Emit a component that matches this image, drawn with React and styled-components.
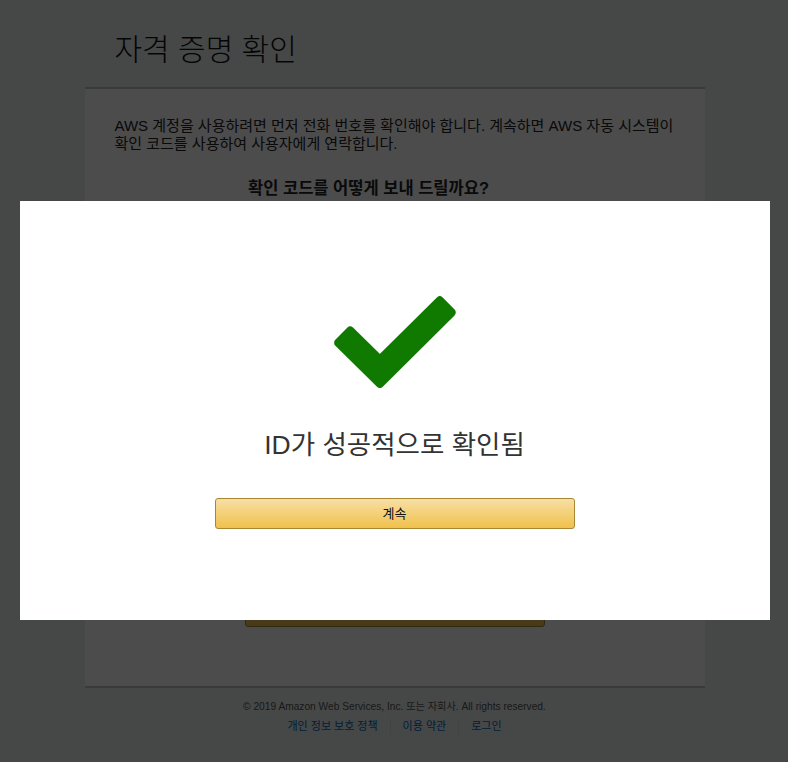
import styled, { createGlobalStyle } from "styled-components";

const GlobalStyle = createGlobalStyle`
    html, body {
        margin: 0;
        padding: 0;
        background: #eaf0ed;
        font-family: "Liberation Sans", Arial, "Noto Sans CJK KR", sans-serif;
    }
`;

export default function App(){
    return(
        <>
        <GlobalStyle/>
        <PAGE>
            <WRAP>
                <TITLE>자격 증명 확인</TITLE>
                <CARD>
                    <TEXT>AWS 계정을 사용하려면 먼저 전화 번호를 확인해야 합니다. 계속하면 AWS 자동 시스템이 확인 코드를 사용하여 사용자에게 연락합니다.</TEXT>
                    <QUESTION>확인 코드를 어떻게 보내 드릴까요?</QUESTION>
                    <HIDDEN/>
                    <BIGBUTTON>SMS 보내기</BIGBUTTON>
                </CARD>
                <FOOTER>
                    <COPY>© 2019 Amazon Web Services, Inc. 또는 자회사. All rights reserved.</COPY>
                    <LINKS>
                        <LINK href="#">개인 정보 보호 정책</LINK>
                        <LINK href="#">이용 약관</LINK>
                        <LINK href="#">로그인</LINK>
                    </LINKS>
                </FOOTER>
            </WRAP>
        </PAGE>
        <OVERLAY>
            <MODAL>
                <svg width="122" height="92" viewBox="2.2 2.4 117.2 86.8" preserveAspectRatio="none">
                    <polygon
                        points="6.3,46.5 46.3,85.1 115.2,18 103.8,6.6 46.3,62.5 17.7,35.1"
                        fill="#107a00"
                        stroke="#107a00"
                        strokeWidth="8"
                        strokeLinejoin="round"
                    />
                </svg>
                <MESSAGE>ID가 성공적으로 확인됨</MESSAGE>
                <BUTTON>계속</BUTTON>
            </MODAL>
        </OVERLAY>
        </>
    );
}

const PAGE = styled.div`
    min-height: 762px;
    background: #eaf0ed;
`;
const WRAP = styled.div`
    width: 620px;
    margin: 0 auto;
    padding-left: 1px;
`;
const TITLE = styled.h1`
    margin: 0;
    padding: 30px 30px 18px 30px;
    height: 39px;
    font-size: 30px;
    font-weight: 300;
    line-height: 39px;
    color: #111;
`;
const CARD = styled.div`
    background: #ffffff;
    border-top: 2px solid #c4c4c4;
    border-bottom: 2px solid #c4c4c4;
    padding: 28px 30px 59px 30px;
`;
const TEXT = styled.p`
    margin: 0;
    font-size: 15px;
    line-height: 18px;
    color: #222;
`;
const QUESTION = styled.h3`
    margin: 25px 52px 0 0;
    text-align: center;
    font-size: 16.5px;
    font-weight: 700;
    line-height: 20px;
    color: #222;
`;
const HIDDEN = styled.div`
    height: 399px;
`;
const BIGBUTTON = styled.div`
    width: 298px;
    height: 28px;
    margin: 0 auto;
    border: 1px solid #a88734;
    border-radius: 3px;
    background: linear-gradient(#f7dfa5, #f0c14b);
    font-size: 13px;
    line-height: 28px;
    text-align: center;
    color: #111;
`;
const FOOTER = styled.div`
    padding-top: 11px;
    text-align: center;
`;
const COPY = styled.div`
    font-size: 10.2px;
    line-height: 16px;
    color: #555;
`;
const LINKS = styled.div`
    display: flex;
    justify-content: center;
    margin-top: 3px;
`;
const LINK = styled.a`
    font-size: 11px;
    line-height: 16px;
    color: #0066c0;
    text-decoration: none;
    padding: 0 12px;
    & + & {
        border-left: 1px solid #ddd;
    }
`;
const OVERLAY = styled.div`
    position: fixed;
    inset: 0;
    background: rgba(0, 0, 0, 0.7);
    display: flex;
    justify-content: center;
    align-items: flex-start;
    padding-top: 201px;
`;
const MODAL = styled.div`
    width: 750px;
    height: 419px;
    margin-left: 1px;
    box-sizing: border-box;
    background: #ffffff;
    padding-top: 95px;
    display: flex;
    flex-direction: column;
    align-items: center;
`;
const MESSAGE = styled.h2`
    margin: 42px 0 0 0;
    font-size: 26.5px;
    font-weight: 400;
    line-height: 30px;
    color: #333;
`;
const BUTTON = styled.button`
    margin-top: 38px;
    width: 360px;
    height: 31px;
    padding: 0 0 3px 0;
    border: 1px solid #a88734;
    border-radius: 3px;
    background: linear-gradient(#f7dfa5, #f0c14b);
    font-family: "Liberation Sans", Arial, "Noto Sans CJK KR", sans-serif;
    font-size: 13px;
    color: #111;
    cursor: pointer;
`;
